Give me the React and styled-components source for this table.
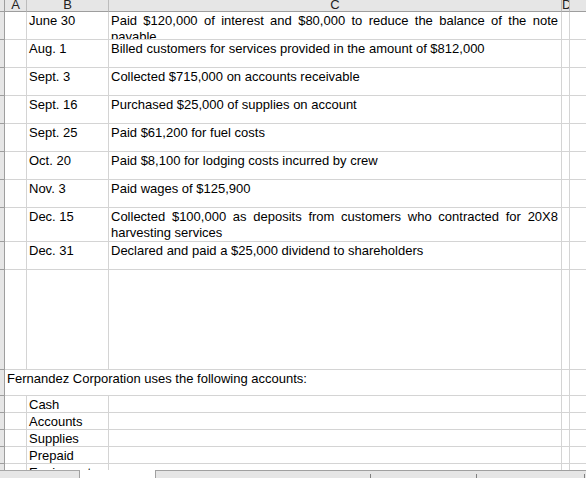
import React from 'react';
import styled, { createGlobalStyle } from 'styled-components';

const GlobalStyle = createGlobalStyle`
  html, body {
    margin: 0;
    padding: 0;
    background: #ffffff;
  }
  body {
    font-family: "Liberation Sans", Arial, sans-serif;
    font-size: 13px;
    color: #000000;
  }
`;

const COLS = '5px 22px 82px 453px 8px 64px';
const GRID = '#d4d4d4';
const HEAD_BG = '#e6e6e6';
const HEAD_LINE = '#9e9e9e';

const entries = [
  { date: 'June 30', text: 'Paid $120,000 of interest and $80,000 to reduce the balance of the note payable', h: 28, justify: true },
  { date: 'Aug. 1', text: 'Billed customers for services provided in the amount of $812,000', h: 28 },
  { date: 'Sept. 3', text: 'Collected $715,000 on accounts receivable', h: 28 },
  { date: 'Sept. 16', text: 'Purchased $25,000 of supplies on account', h: 28 },
  { date: 'Sept. 25', text: 'Paid $61,200 for fuel costs', h: 28 },
  { date: 'Oct. 20', text: 'Paid $8,100 for lodging costs incurred by crew', h: 28 },
  { date: 'Nov. 3', text: 'Paid wages of $125,900', h: 28 },
  { date: 'Dec. 15', text: 'Collected $100,000 as deposits from customers who contracted for 20X8 harvesting services', h: 34, justify: true },
  { date: 'Dec. 31', text: 'Declared and paid a $25,000 dividend to shareholders', h: 28 },
];

const accounts = ['Cash', 'Accounts', 'Supplies', 'Prepaid', 'Equipment'];

const App = () => (
  <Page>
    <GlobalStyle />
    <Sheet>
      <Row $h={12}>
        <Corner />
        <ColHead>A</ColHead>
        <ColHead>B</ColHead>
        <ColHead>C</ColHead>
        <ColHead>D</ColHead>
        <ColHead>E</ColHead>
      </Row>
      {entries.map((e) => (
        <Row key={e.date} $h={e.h}>
          <RowHead />
          <Cell />
          <Cell>{e.date}</Cell>
          <Cell $justify={e.justify}>{e.text}</Cell>
          <Cell />
          <Cell />
        </Row>
      ))}
      <Row $h={100}>
        <RowHead />
        <Cell />
        <Cell />
        <Cell />
        <Cell />
        <Cell />
      </Row>
      <Row $h={26}>
        <RowHead />
        <Cell $span={3}>Fernandez Corporation uses the following accounts:</Cell>
        <Cell />
        <Cell />
      </Row>
      {accounts.map((a) => (
        <Row key={a} $h={17}>
          <RowHead />
          <Cell />
          <Cell>{a}</Cell>
          <Cell />
          <Cell />
          <Cell />
        </Row>
      ))}
    </Sheet>
    <TabBar>
      <Tab />
      <ActiveTab />
      <Track>
        <Gap $w={214} />
        <Tick />
        <Gap $w={105} />
        <Tick />
        <Gap $w={107} />
        <Tick />
      </Track>
    </TabBar>
  </Page>
);

const Page = styled.div`
  height: 100vh;
  display: flex;
  flex-direction: column;
  overflow: hidden;
`;

const Sheet = styled.div`
  flex: 1;
  min-height: 0;
  overflow: hidden;
`;

const Row = styled.div`
  display: grid;
  grid-template-columns: ${COLS};
  height: ${(p) => p.$h}px;
`;

const Corner = styled.div`
  background: ${HEAD_BG};
  border-right: 1px solid ${HEAD_LINE};
  border-bottom: 1px solid ${HEAD_LINE};
`;

const ColHead = styled.div`
  background: ${HEAD_BG};
  border-right: 1px solid #bcbcbc;
  border-bottom: 1px solid ${HEAD_LINE};
  display: flex;
  justify-content: safe center;
  align-items: flex-end;
  line-height: 13px;
  overflow: hidden;
  color: #222;
`;

const RowHead = styled.div`
  background: ${HEAD_BG};
  border-right: 1px solid ${HEAD_LINE};
  border-bottom: 1px solid ${HEAD_LINE};
`;

const Cell = styled.div`
  grid-column: span ${(p) => p.$span || 1};
  border-right: 1px solid ${GRID};
  border-bottom: 1px solid ${GRID};
  padding: 1px 3px 0 2px;
  line-height: 16px;
  overflow: hidden;
  white-space: normal;
  text-align: ${(p) => (p.$justify ? 'justify' : 'left')};
`;

const TabBar = styled.div`
  height: 8px;
  flex-shrink: 0;
  display: flex;
`;

const Tab = styled.div`
  width: 80px;
  background: ${HEAD_BG};
  border-top: 1px solid #a8a8a8;
  border-right: 1px solid #a0a0a0;
  box-sizing: border-box;
`;

const ActiveTab = styled.div`
  width: 75px;
  background: #ffffff;
`;

const Track = styled.div`
  flex: 1;
  display: flex;
  align-items: flex-end;
  background: ${HEAD_BG};
  border-top: 1px solid #a0a0a0;
  border-left: 1px solid #a0a0a0;
`;

const Gap = styled.div`
  width: ${(p) => p.$w}px;
`;

const Tick = styled.div`
  width: 1px;
  height: 4px;
  background: #808080;
`;

export default App;
